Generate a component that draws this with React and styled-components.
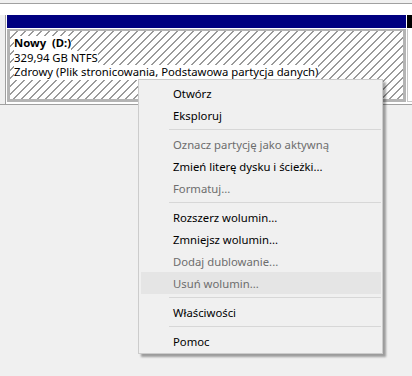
import styled, { createGlobalStyle } from 'styled-components';

const GlobalStyle = createGlobalStyle`
  html, body {
    margin: 0;
    padding: 0;
    background: #f0f0f0;
  }

  body {
    font-family: "Noto Sans", "Open Sans", sans-serif;
    font-size: 11.3px;
    color: #000;
  }
`;

const Screen = styled.div`
  position: relative;
  width: 412px;
  height: 376px;
  overflow: hidden;
  background: #f0f0f0;
`;

const TopStrip = styled.div`
  height: 3px;
  background: #f0f0f0;
  border-bottom: 1px solid #a0a0a0;
`;

const DiskRow = styled.div`
  display: flex;
  height: 89px;
  padding-top: 11px;
  background: #fff;
  border-bottom: 1px solid #a0a0a0;
`;

const DiskLabelStub = styled.div`
  width: 5px;
  flex-shrink: 0;
  background: #f0f0f0;
  border-right: 1px solid #a0a0a0;
  margin-right: 1px;
`;

const Volume = styled.div`
  display: flex;
  flex-direction: column;
  width: ${({ $width }) => ($width ? `${$width}px` : 'auto')};
  flex: ${({ $width }) => ($width ? '0 0 auto' : '1 1 auto')};
  margin-right: ${({ $gap }) => $gap || 0}px;
`;

const VolumeHeader = styled.div`
  height: 13px;
  background: ${({ $color }) => $color};
`;

const VolumeBody = styled.div`
  flex: 1;
  margin-top: 1px;
  margin-bottom: 2px;
  padding: 4px 4px 0;
  border: 3px solid #b4b4b4;
  border-top-width: 2px;
  background-color: #fff;
  background-image: repeating-linear-gradient(
    135deg,
    transparent 0,
    transparent 4.8px,
    #9a9a9a 4.8px,
    #9a9a9a 5.657px
  );
`;

const EmptyBody = styled.div`
  flex: 1;
  margin-top: 1px;
  margin-bottom: 2px;
  border-left: 1px solid #c8c8c8;
  border-bottom: 1px solid #c8c8c8;
  background: #fff;
`;

const InfoLine = styled.div`
  height: 14.5px;
  white-space: pre;
`;

const InfoText = styled.span`
  display: inline-block;
  height: 14.5px;
  line-height: 14.5px;
  background: #fff;
  font-weight: ${({ $bold }) => ($bold ? 700 : 400)};
`;

const Menu = styled.div`
  position: absolute;
  left: 138px;
  top: 79px;
  width: 243px;
  padding: 2px 0 1px;
  background: #f0f0f0;
  border: 1px solid #cccccc;
  box-shadow: 3px 3px 2px rgba(0, 0, 0, 0.35);
`;

const MenuItem = styled.div`
  height: 22px;
  margin: 0 1px 0 2px;
  padding-left: 32px;
  display: flex;
  align-items: center;
  color: ${({ $disabled }) => ($disabled ? '#6d6d6d' : '#000')};
  background: ${({ $hover }) => ($hover ? '#e5e5e5' : 'transparent')};
`;

const MenuSeparator = styled.div`
  height: 7px;
  margin: 0 1px 0 30px;
  display: flex;
  align-items: center;

  &::before {
    content: '';
    flex: 1;
    height: 1px;
    background: #d7d7d7;
  }
`;

const menuEntries = [
  { label: 'Otwórz' },
  { label: 'Eksploruj' },
  { separator: true },
  { label: 'Oznacz partycję jako aktywną', disabled: true },
  { label: 'Zmień literę dysku i ścieżki...' },
  { label: 'Formatuj...', disabled: true },
  { separator: true },
  { label: 'Rozszerz wolumin...' },
  { label: 'Zmniejsz wolumin...' },
  { label: 'Dodaj dublowanie...', disabled: true },
  { label: 'Usuń wolumin...', disabled: true, hover: true },
  { separator: true },
  { label: 'Właściwości' },
  { separator: true },
  { label: 'Pomoc' }
];

export default function App() {
  return (
    <>
      <GlobalStyle />
      <Screen>
        <TopStrip />
        <DiskRow>
          <DiskLabelStub />
          <Volume $width={399} $gap={1}>
            <VolumeHeader $color="#000080" />
            <VolumeBody>
              <InfoLine>
                <InfoText $bold>Nowy  (D:)</InfoText>
              </InfoLine>
              <InfoLine>
                <InfoText>329,94 GB NTFS</InfoText>
              </InfoLine>
              <InfoLine>
                <InfoText>Zdrowy (Plik stronicowania, Podstawowa partycja danych)</InfoText>
              </InfoLine>
            </VolumeBody>
          </Volume>
          <Volume>
            <VolumeHeader $color="#000" />
            <EmptyBody />
          </Volume>
        </DiskRow>

        <Menu>
          {menuEntries.map((entry, i) =>
            entry.separator ? (
              <MenuSeparator key={i} />
            ) : (
              <MenuItem key={i} $disabled={entry.disabled} $hover={entry.hover}>
                {entry.label}
              </MenuItem>
            )
          )}
        </Menu>
      </Screen>
    </>
  );
}
